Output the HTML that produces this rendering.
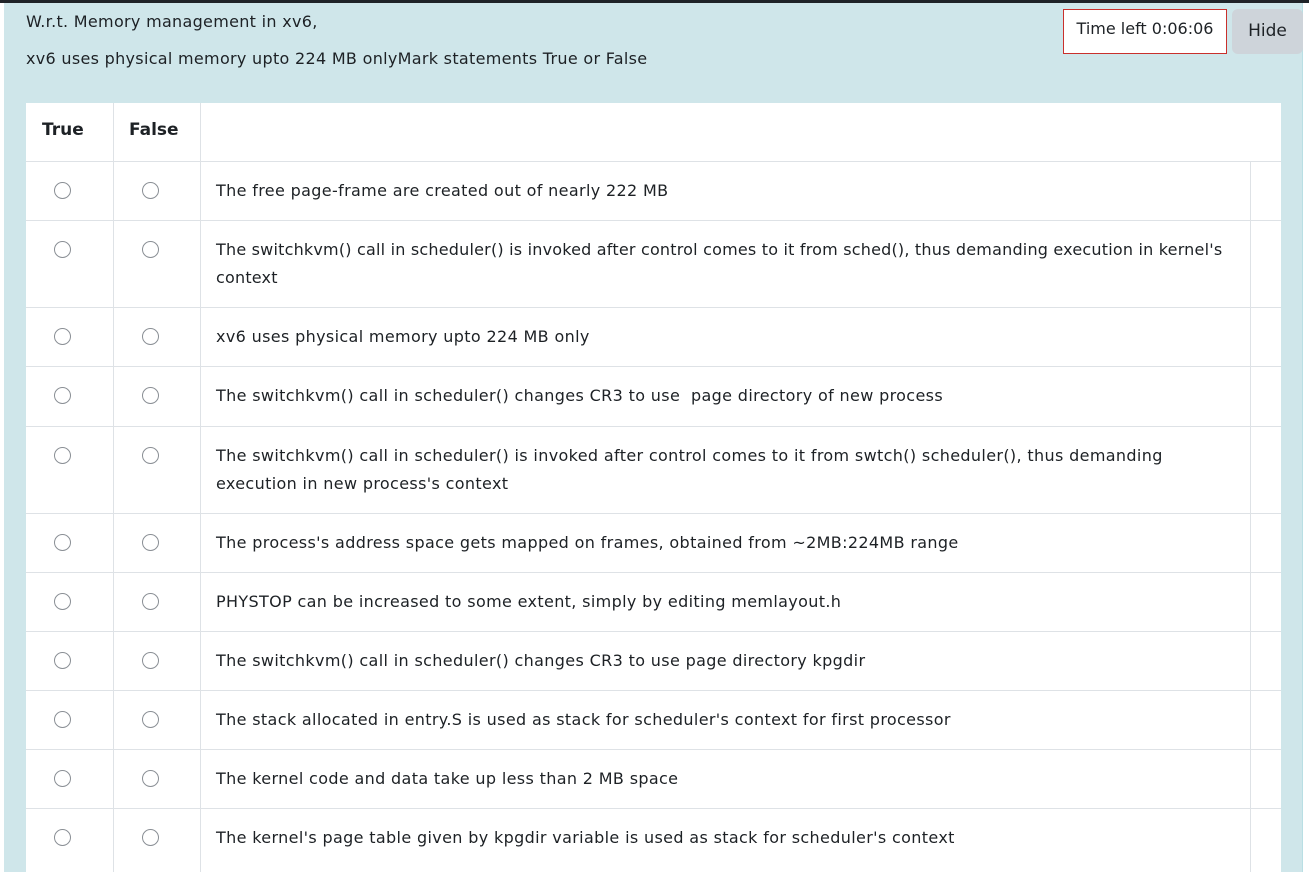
<!DOCTYPE html>
<html><head><meta charset="utf-8"><style>
*{box-sizing:border-box;margin:0;padding:0}
body{width:1309px;height:872px;overflow:hidden;background:#fff;font-family:"DejaVu Sans","Liberation Sans",sans-serif;color:#1d2125;position:relative}
.top{position:absolute;left:0;top:0;width:1309px;height:3px;background:#1f2328}
.bg{position:absolute;left:4px;top:3px;width:1299px;height:869px;background:#cfe6ea;border-right:1px solid #b9dfe4}
.q{position:absolute;left:26px;font-size:16px;letter-spacing:0.3px}
.timer{position:absolute;left:1063px;top:9px;width:164px;height:45px;border:1px solid #c9302c;background:#fff;font-size:16px;text-align:center;line-height:38px}
.hide{position:absolute;left:1232px;top:9px;width:71px;height:45px;background:#ced4da;border-radius:6px;font-size:17px;text-align:center;line-height:45px;color:#1d2125}
.tbl{position:absolute;left:26px;top:103px;width:1255px;height:769px;background:#fff}
.row{position:absolute;left:0;width:1255px;border-top:1px solid #dee2e6}
.v{position:absolute;top:0;bottom:0;width:1px;background:#dee2e6}
.r{position:absolute;top:20px;width:17px;height:17px;border:1px solid #8a8f95;border-radius:50%;background:#fff}
.t{position:absolute;left:190px;top:15px;width:1030px;font-size:16px;line-height:28px;letter-spacing:0.35px;white-space:nowrap}
.h{position:absolute;top:17px;font-weight:bold;font-size:17px}
</style></head><body>
<div class="top"></div>
<div class="bg"></div>
<div class="q" style="top:12px">W.r.t. Memory management in xv6,</div>
<div class="q" style="top:49px">xv6 uses physical memory upto 224 MB onlyMark statements True or False</div>
<div class="timer">Time left 0:06:06</div>
<div class="hide">Hide</div>
<div class="tbl">
<div class="row" style="top:0;height:58px;border-top:none">
<div class="v" style="left:87px"></div><div class="v" style="left:174px"></div>
<span class="h" style="left:16px">True</span><span class="h" style="left:103px">False</span>
</div>
<div class="row" style="top:58px;height:59px"><div class="v" style="left:87px"></div><div class="v" style="left:174px"></div><div class="v" style="left:1224px"></div><div class="r" style="left:28px"></div><div class="r" style="left:116px"></div><div class="t">The free page-frame are created out of nearly 222 MB</div></div>
<div class="row" style="top:117px;height:87px"><div class="v" style="left:87px"></div><div class="v" style="left:174px"></div><div class="v" style="left:1224px"></div><div class="r" style="left:28px"></div><div class="r" style="left:116px"></div><div class="t" style="letter-spacing:0.2px">The switchkvm() call in scheduler() is invoked after control comes to it from sched(), thus demanding execution in kernel's<br>context</div></div>
<div class="row" style="top:204px;height:59px"><div class="v" style="left:87px"></div><div class="v" style="left:174px"></div><div class="v" style="left:1224px"></div><div class="r" style="left:28px"></div><div class="r" style="left:116px"></div><div class="t">xv6 uses physical memory upto 224 MB only</div></div>
<div class="row" style="top:263px;height:60px"><div class="v" style="left:87px"></div><div class="v" style="left:174px"></div><div class="v" style="left:1224px"></div><div class="r" style="left:28px"></div><div class="r" style="left:116px"></div><div class="t">The switchkvm() call in scheduler() changes CR3 to use&nbsp; page directory of new process</div></div>
<div class="row" style="top:323px;height:87px"><div class="v" style="left:87px"></div><div class="v" style="left:174px"></div><div class="v" style="left:1224px"></div><div class="r" style="left:28px"></div><div class="r" style="left:116px"></div><div class="t">The switchkvm() call in scheduler() is invoked after control comes to it from swtch() scheduler(), thus demanding<br>execution in new process's context</div></div>
<div class="row" style="top:410px;height:59px"><div class="v" style="left:87px"></div><div class="v" style="left:174px"></div><div class="v" style="left:1224px"></div><div class="r" style="left:28px"></div><div class="r" style="left:116px"></div><div class="t">The process's address space gets mapped on frames, obtained from ~2MB:224MB range</div></div>
<div class="row" style="top:469px;height:59px"><div class="v" style="left:87px"></div><div class="v" style="left:174px"></div><div class="v" style="left:1224px"></div><div class="r" style="left:28px"></div><div class="r" style="left:116px"></div><div class="t">PHYSTOP can be increased to some extent, simply by editing memlayout.h</div></div>
<div class="row" style="top:528px;height:59px"><div class="v" style="left:87px"></div><div class="v" style="left:174px"></div><div class="v" style="left:1224px"></div><div class="r" style="left:28px"></div><div class="r" style="left:116px"></div><div class="t">The switchkvm() call in scheduler() changes CR3 to use page directory kpgdir</div></div>
<div class="row" style="top:587px;height:59px"><div class="v" style="left:87px"></div><div class="v" style="left:174px"></div><div class="v" style="left:1224px"></div><div class="r" style="left:28px"></div><div class="r" style="left:116px"></div><div class="t">The stack allocated in entry.S is used as stack for scheduler's context for first processor</div></div>
<div class="row" style="top:646px;height:59px"><div class="v" style="left:87px"></div><div class="v" style="left:174px"></div><div class="v" style="left:1224px"></div><div class="r" style="left:28px"></div><div class="r" style="left:116px"></div><div class="t">The kernel code and data take up less than 2 MB space</div></div>
<div class="row" style="top:705px;height:64px"><div class="v" style="left:87px"></div><div class="v" style="left:174px"></div><div class="v" style="left:1224px"></div><div class="r" style="left:28px"></div><div class="r" style="left:116px"></div><div class="t">The kernel's page table given by kpgdir variable is used as stack for scheduler's context</div></div>
</div>
</body></html>
